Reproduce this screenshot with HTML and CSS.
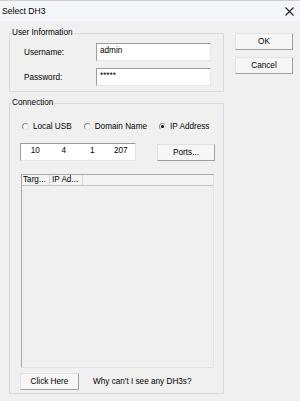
FILE: index.html
```html
<!DOCTYPE html>
<html lang="en">
<head>
    <meta charset="UTF-8">
    <title>Select DH3</title>
    <link rel="stylesheet" href="styles.css">
</head>
<body>
    <div class="window">
        <div class="titlebar">
            <span class="title">Select DH3</span>
            <svg class="close" width="9" height="9" viewBox="0 0 9 9">
                <path d="M0.5 0.5L8.5 8.5M8.5 0.5L0.5 8.5" stroke="#222" stroke-width="1.1" fill="none"/>
            </svg>
        </div>
        <div class="client">
            <div class="main">
                <fieldset class="group">
                    <legend>User Information</legend>
                    <div class="group-body user-body">
                        <div class="field">
                            <label class="label" for="username">Username:</label>
                            <input class="edit" type="text" id="username" value="admin">
                        </div>
                        <div class="field">
                            <label class="label" for="password">Password:</label>
                            <input class="edit" type="text" id="password" value="*****">
                        </div>
                    </div>
                </fieldset>

                <fieldset class="group conn">
                    <legend>Connection</legend>
                    <div class="group-body conn-body">
                        <div class="radios">
                            <span class="radio-item"><span class="radio"></span>Local USB</span>
                            <span class="radio-item"><span class="radio"></span>Domain Name</span>
                            <span class="radio-item"><span class="radio checked"></span>IP Address</span>
                        </div>
                        <div class="ip-row">
                            <div class="ipbox">
                                <span class="octet">10</span>
                                <span class="octet">4</span>
                                <span class="octet">1</span>
                                <span class="octet">207</span>
                            </div>
                            <button class="btn">Ports...</button>
                        </div>
                        <div class="list">
                            <div class="list-head">
                                <span class="col col-target">Targ...</span>
                                <span class="col col-ip">IP Ad...</span>
                            </div>
                        </div>
                        <div class="footer">
                            <button class="btn btn-wide">Click Here</button>
                            <span class="hint">Why can't I see any DH3s?</span>
                        </div>
                    </div>
                </fieldset>
            </div>
            <div class="side">
                <button class="btn">OK</button>
                <button class="btn">Cancel</button>
            </div>
        </div>
    </div>
</body>
</html>
```

FILE: styles.css
```css
* {
    box-sizing: border-box;
}

html, body {
    margin: 0;
}

body {
    font-family: "Liberation Sans", Arial, sans-serif;
    font-size: 8.2px;
    color: #000;
    background-color: #f0f0f0;
    width: 300px;
    height: 401px;
    overflow: hidden;
}

.window {
    height: 401px;
    display: flex;
    flex-direction: column;
    border-top: 1px solid #cfcfcf;
}

.titlebar {
    height: 20px;
    background-color: #f5f6fa;
    display: flex;
    align-items: center;
    justify-content: space-between;
    padding: 0 6px 0 2px;
}

.title {
    font-size: 8.6px;
}

.close {
    display: block;
}

.client {
    flex: 1;
    display: flex;
    gap: 11px;
    padding-left: 9px;
}

.main {
    width: 215px;
    margin-top: 6px;
    display: flex;
    flex-direction: column;
}

.side {
    margin-top: 12px;
    display: flex;
    flex-direction: column;
    gap: 7px;
}

/* group boxes */
.group {
    margin: 0;
    padding: 0;
    min-width: 0;
    border: 1px solid #d9d9d9;
}

.group legend {
    margin-left: 1px;
    padding: 0 1px;
    line-height: 12px;
}

.conn {
    margin-top: 5px;
}

.user-body {
    padding: 4px 12px 5px 14px;
    display: flex;
    flex-direction: column;
    gap: 7px;
}

.field {
    display: flex;
    align-items: center;
}

.label {
    width: 72px;
}

.edit {
    width: 115px;
    height: 18px;
    margin: 0;
    padding: 0 3px 3px;
    font: inherit;
    color: #000;
    background-color: #fff;
    border: 1px solid;
    border-color: #9c9c9c #e6e6e6 #e6e6e6 #9c9c9c;
    outline: none;
}

.conn-body {
    padding: 11px 0 3px 10px;
}

/* radio buttons */
.radios {
    display: flex;
    align-items: center;
    height: 12px;
    margin-left: 2px;
    gap: 12px;
}

.radio-item {
    display: flex;
    align-items: center;
    gap: 4px;
}

.radio {
    position: relative;
    width: 7px;
    height: 7px;
    border-radius: 50%;
    border: 1px solid;
    border-color: #8c8c8c #e4e4e4 #e4e4e4 #8c8c8c;
    background-color: #f7f7f7;
}

.radio.checked::after {
    content: "";
    position: absolute;
    left: 1px;
    top: 1px;
    width: 3px;
    height: 3px;
    border-radius: 50%;
    background-color: #000;
}

/* ip address */
.ip-row {
    margin-top: 11px;
    display: flex;
    align-items: flex-start;
    gap: 21px;
}

.ipbox {
    width: 116px;
    height: 18px;
    display: flex;
    background-color: #fff;
    border: 1px solid;
    border-color: #9c9c9c #e6e6e6 #e6e6e6 #9c9c9c;
    padding-top: 1px;
}

.octet {
    flex: 1;
    text-align: center;
    line-height: 11px;
}

.ip-row .btn {
    margin-top: 1px;
}

/* buttons */
.btn {
    font: inherit;
    color: #000;
    width: 58px;
    height: 17px;
    padding: 0;
    margin: 0;
    background-color: #f6f6f6;
    border: 1px solid;
    border-color: #e2e2e2 #a0a0a0 #a0a0a0 #e2e2e2;
}

.btn-wide {
    width: 59px;
}

/* list view */
.list {
    margin: 13px 0 0 1px;
    width: 193px;
    height: 194px;
    border: 1px solid;
    border-color: #a8a8a8 #e2e2e2 #e2e2e2 #a8a8a8;
}

.list-head {
    display: flex;
    height: 11px;
    border-bottom: 1px solid #c4c4c4;
    background-color: #f4f4f4;
}

.col {
    line-height: 10px;
    border-right: 1px solid #d2d2d2;
}

.col-target {
    width: 28px;
    padding-left: 1px;
}

.col-ip {
    width: 33px;
    padding-left: 2px;
}

.footer {
    margin-top: 5px;
    display: flex;
    align-items: center;
    gap: 14px;
}
```
